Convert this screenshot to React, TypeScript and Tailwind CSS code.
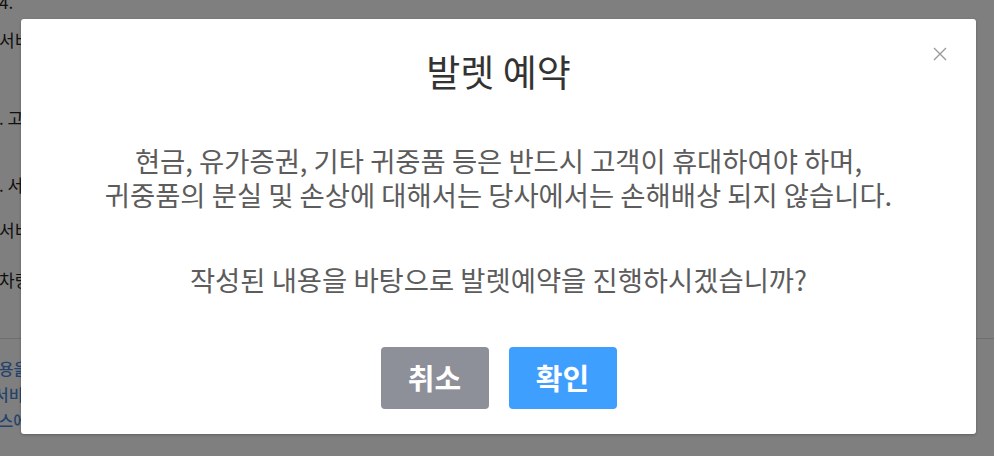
const font = { fontFamily: '"Noto Sans CJK KR", "Noto Sans", sans-serif' };

export default function App() {
  return (
    <div className="relative w-[994px] h-[456px] overflow-hidden bg-white" style={font}>
      {/* page behind the modal */}
      <div className="text-[17px] text-[#222] -ml-[1px]">
        <div className="h-[20px] leading-[4px]">4.</div>
        <div className="mt-[8px] leading-[24px]">서비스 이용 안내</div>
        <div className="mt-[54px] leading-[24px]">. 고객 안내 사항</div>
        <div className="mt-[43px] leading-[24px]">. 서비스 이용 시간</div>
        <div className="mt-[21px] leading-[24px]">서비스 요금 안내</div>
        <div className="mt-[26px] leading-[24px]">차량 인수 안내</div>
        <div className="mt-[46px] border-t border-[#ddd]" />
        <div className="pt-[16px] text-[16px] leading-[26px] font-medium text-[#4a86d6]">
          <div className="-ml-[15px]">내용을 확인하였습니다</div>
          <div className="-ml-[5px]">서비스 약관에 동의합니다</div>
          <div className="-ml-[30px]">서비스에 동의합니다</div>
        </div>
      </div>

      {/* overlay */}
      <div className="absolute inset-0 bg-black/50">
        <div className="absolute left-[21px] top-[19px] w-[955px] h-[415px] bg-white rounded-[3px] shadow-[0_1px_3px_rgba(0,0,0,0.25)]">
          <button className="absolute left-[912px] top-[28px] w-[14px] h-[14px]">
            <svg viewBox="0 0 14 14" className="w-[14px] h-[14px]" stroke="#9a9a9a" strokeWidth={1.4} fill="none">
              <path d="M1 1l12 12M13 1L1 13" />
            </svg>
          </button>
          <div className="flex flex-col items-center pt-[28px]">
            <h2 className="text-[37px] leading-[48px] text-[#333] font-normal">발렛 예약</h2>
            <div className="mt-[48px] text-center text-[27.4px] leading-[34px] text-[#5c5c5c]">
              <p>현금, 유가증권, 기타 귀중품 등은 반드시 고객이 휴대하여야 하며,</p>
              <p>귀중품의 분실 및 손상에 대해서는 당사에서는 손해배상 되지 않습니다.</p>
              <p className="mt-[51px]">작성된 내용을 바탕으로 발렛예약을 진행하시겠습니까?</p>
            </div>
            <div className="mt-[51px] flex gap-[20px]">
              <button className="w-[108px] h-[62px] rounded-[4px] bg-[#8e9099] text-white text-[29px] font-bold">
                취소
              </button>
              <button className="w-[108px] h-[62px] rounded-[4px] bg-[#3f9fff] text-white text-[29px] font-bold">
                확인
              </button>
            </div>
          </div>
        </div>
      </div>
    </div>
  );
}
